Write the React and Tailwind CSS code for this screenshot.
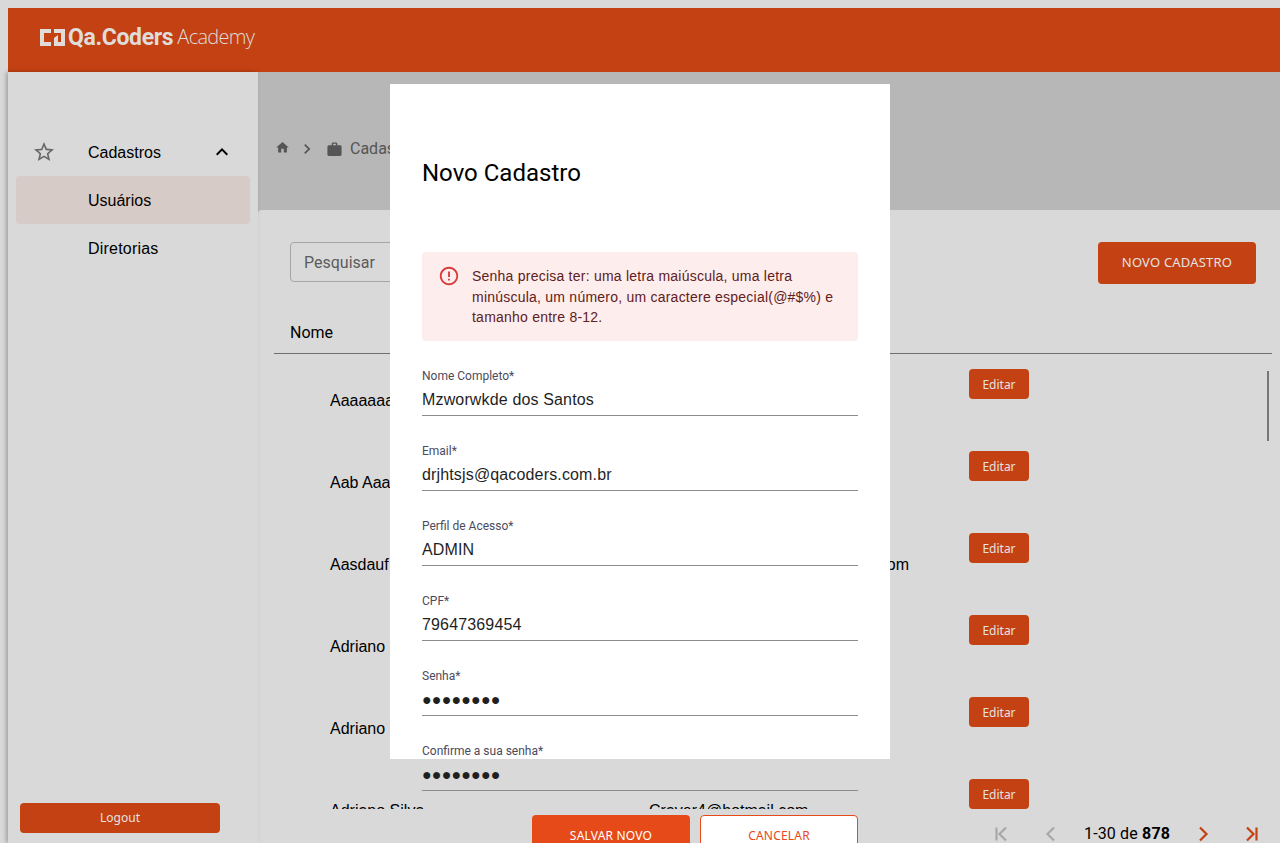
const ICONS = {
  home: 'M10 20v-6h4v6h5v-8h3L12 3 2 12h3v8z',
  work: 'M20 6h-4V4c0-1.11-.89-2-2-2h-4c-1.11 0-2 .89-2 2v2H4c-1.11 0-1.99.89-1.99 2L2 19c0 1.11.89 2 2 2h16c1.11 0 2-.89 2-2V8c0-1.11-.89-2-2-2zm-6 0h-4V4h4v2z',
  star: 'M22 9.24l-7.19-.62L12 2 9.19 8.63 2 9.24l5.46 4.73L5.82 21 12 17.27 18.18 21l-1.63-7.03L22 9.24zM12 15.4l-3.76 2.27 1-4.28-3.32-2.88 4.38-.38L12 6.1l1.71 4.04 4.38.38-3.32 2.88 1 4.28L12 15.4z',
  right: 'M10 6L8.59 7.41 13.17 12l-4.58 4.59L10 18l6-6z',
  up: 'M12 8l-6 6 1.41 1.41L12 10.83l4.59 4.58L18 14z',
  error: 'M11 15h2v2h-2zm0-8h2v6h-2zm.99-5C6.47 2 2 6.48 2 12s4.47 10 9.99 10C17.52 22 22 17.52 22 12S17.52 2 11.99 2zM12 20c-4.42 0-8-3.58-8-8s3.58-8 8-8 8 3.58 8 8-3.58 8-8 8z',
}

// pager arrows are thinner and taller than the material ones, so stroked
const PAGER = {
  first: 'M7.5 5.5v13M17 5.5L10.5 12l6.5 6.5',
  left: 'M15 5.5L8.5 12l6.5 6.5',
  right: 'M9 5.5l6.5 6.5L9 18.5',
  last: 'M7 5.5l6.5 6.5L7 18.5M16.5 5.5v13',
}

const ROWS = [
  { name: 'Aaaaaaa', email: '' },
  { name: 'Aab Aaa', email: '' },
  { name: 'Aasdauf', email: 'aasdaufhgsdjfhgsdh@qacoders.com' },
  { name: 'Adriano', email: '' },
  { name: 'Adriano', email: '' },
  { name: 'Adriano Silva', email: 'Craver4@hotmail.com' },
]

const FIELDS = [
  { label: 'Nome Completo*', value: 'Mzworwkde dos Santos' },
  { label: 'Email*', value: 'drjhtsjs@qacoders.com.br' },
  { label: 'Perfil de Acesso*', value: 'ADMIN' },
  { label: 'CPF*', value: '79647369454' },
  { label: 'Senha*', value: '●●●●●●●●' },
  { label: 'Confirme a sua senha*', value: '●●●●●●●●' },
]

function Icon({ name, className }) {
  return (
    <svg className={className} viewBox="0 0 24 24" fill="currentColor">
      <path d={ICONS[name]} />
    </svg>
  )
}

function PagerIcon({ name, className }) {
  return (
    <svg className={className} viewBox="0 0 24 24" fill="none" stroke="currentColor" strokeWidth="2.2">
      <path d={PAGER[name]} />
    </svg>
  )
}

function Logo() {
  return (
    <div className="flex items-center text-[#dfdcda]">
      <svg className="w-[25px] h-[17px]" viewBox="0 0 25 17" fill="currentColor">
        <path d="M0 0h11v4H4v9h7v4H0z" />
        <path d="M14 0h11v17H14v-4h7V4h-7z" />
        <path d="M14 9l4-3v7h-4z" />
      </svg>
      <span className="ml-[3px] font-['Roboto',sans-serif] text-[23px] leading-none font-bold tracking-[-0.35px]">Qa.Coders</span>
      <span className="ml-[4px] font-['Open_Sans',sans-serif] text-[20px] leading-none font-light tracking-[-0.7px]">Academy</span>
    </div>
  )
}

function Sidebar() {
  return (
    <aside className="relative z-10 flex w-[250px] h-[771px] flex-col bg-[#d9d9d9] pt-14 shadow-[-2px_0_4px_rgba(0,0,0,0.25)] font-['Liberation_Sans',sans-serif] text-base text-black">
      <div className="flex h-12 items-center">
        <Icon name="star" className="ml-6 w-6 h-6 text-[#666]" />
        <span className="ml-8 pt-0.5">Cadastros</span>
        <Icon name="up" className="ml-auto mr-6 w-6 h-6" />
      </div>
      <div className="mx-2 flex h-12 items-center rounded bg-[#d7cbc7] pl-[72px] pt-0.5">Usuários</div>
      <div className="flex h-12 items-center pl-20 pt-0.5 tracking-[0.2px]">Diretorias</div>
      <button className="mt-auto mb-[10px] ml-3 h-[30px] w-[200px] rounded bg-[#c34112] font-['Noto_Sans',sans-serif] text-xs text-[#e3e3e3]">
        Logout
      </button>
    </aside>
  )
}

function Table() {
  return (
    <div className="ml-4 mr-2 mt-[29px] font-['Liberation_Sans',sans-serif] text-base text-black">
      <div className="flex h-[41px] items-center border-b border-[#6f6f6f] pl-4 font-['Roboto',sans-serif]">Nome</div>
      <div className="h-[455px] overflow-hidden">
        {ROWS.map((row, i) => (
          <div key={i} className="grid h-[82px] grid-cols-[375px_320px_1fr]">
            <div className="pl-14 pt-[35px]">{row.name}</div>
            <div className="pt-[35px] whitespace-nowrap">{row.email}</div>
            <div className="pt-[15px]">
              <button className="h-[30px] w-[60px] rounded bg-[#c34112] pt-px font-['Noto_Sans',sans-serif] text-xs text-[#e3e3e3]">Editar</button>
            </div>
          </div>
        ))}
      </div>
    </div>
  )
}

function Pagination() {
  return (
    <div className="mt-[13px] flex h-6 items-center font-['Roboto',sans-serif] text-base tracking-[0.15px] text-black">
      <PagerIcon name="first" className="ml-[731px] w-6 h-6 text-[#a8a8a8]" />
      <PagerIcon name="left" className="ml-[26px] w-6 h-6 text-[#a8a8a8]" />
      <span className="ml-[21px]">1-30 de <b className="font-bold">878</b></span>
      <PagerIcon name="right" className="ml-[21px] w-6 h-6 text-[#c34112]" />
      <PagerIcon name="last" className="ml-[25px] w-6 h-6 text-[#c34112]" />
    </div>
  )
}

function Modal() {
  return (
    <div className="absolute left-[390px] top-[84px] h-[675px] w-[500px] bg-white px-8 pt-[73px]">
      <h2 className="font-['Roboto',sans-serif] text-2xl leading-8 font-normal text-black">Novo Cadastro</h2>
      <div className="mt-[63px] flex h-[89px] rounded bg-[#fdeded] pl-4 pr-6 pt-[14px]">
        <Icon name="error" className="-mt-px w-[22px] h-[22px] shrink-0 text-[#d93a3a]" />
        <p className="ml-[12px] font-['Liberation_Sans',sans-serif] text-sm leading-[20.5px] tracking-[0.23px] text-[#5f2120]">
          Senha precisa ter: uma letra maiúscula, uma letra minúscula, um número, um caractere especial(@#$%) e tamanho entre 8-12.
        </p>
      </div>
      <div className="mt-[27px]">
        {FIELDS.map((f) => (
          <div key={f.label} className="mb-[27px] h-[48px] border-b border-[#8c8c8c]">
            <div className="font-['Roboto',sans-serif] text-xs leading-4 text-[#4b4b5c]">{f.label}</div>
            <div className="mt-1 font-['Liberation_Sans',sans-serif] text-base leading-6 tracking-[0.15px] text-[#1f1f1f]">{f.value}</div>
          </div>
        ))}
      </div>
      <div className="absolute left-[142px] top-[731px] flex gap-[10px] font-['Noto_Sans',sans-serif] text-xs tracking-[0.2px]">
        <button className="h-[42px] w-[158px] rounded bg-[#e64a19] text-white">SALVAR NOVO</button>
        <button className="h-[42px] w-[158px] rounded border border-[#e64a19] bg-white text-[#e64a19]">CANCELAR</button>
      </div>
    </div>
  )
}

export default function App() {
  return (
    <div className="relative h-[843px] w-[1280px] overflow-hidden bg-[#d9d9d9] pl-2 pt-2">
      <header className="flex h-16 items-center bg-[#c34112] pl-8 pb-[6px]">
        <Logo />
      </header>
      <div className="flex">
        <Sidebar />
        <main className="flex-1 bg-[#b7b7b7]">
          <div className="flex h-[138px] items-center gap-[7px] pl-[17px] pt-4 font-['Roboto',sans-serif] text-base text-[#555]">
            <Icon name="home" className="w-[15px] h-[15px] -mt-[3px]" />
            <Icon name="right" className="w-5 h-5" />
            <Icon name="work" className="ml-[2px] w-[17px] h-[17px]" />
            <span>Cadastros</span>
          </div>
          <div className="rounded-tl h-[633px] bg-[#d9d9d9]">
            <div className="flex h-[42px] items-start justify-between pl-8 pr-6 pt-8 box-content">
              <div className="flex h-10 w-[300px] items-center rounded border border-[#a6a6a6] pl-[13px] pt-0.5 font-['Roboto',sans-serif] text-base text-[#5c5c5c]">Pesquisar</div>
              <button className="h-[42px] w-[158px] rounded bg-[#c34112] font-['Noto_Sans',sans-serif] text-[13px] tracking-[0.2px] text-[#e3e3e3]">NOVO CADASTRO</button>
            </div>
            <Table />
            <Pagination />
          </div>
        </main>
      </div>
      {/* scrollbar of the list */}
      <div className="absolute left-[1267px] top-[371px] h-[70px] w-[2px] bg-[#777]" />
      <Modal />
    </div>
  )
}
